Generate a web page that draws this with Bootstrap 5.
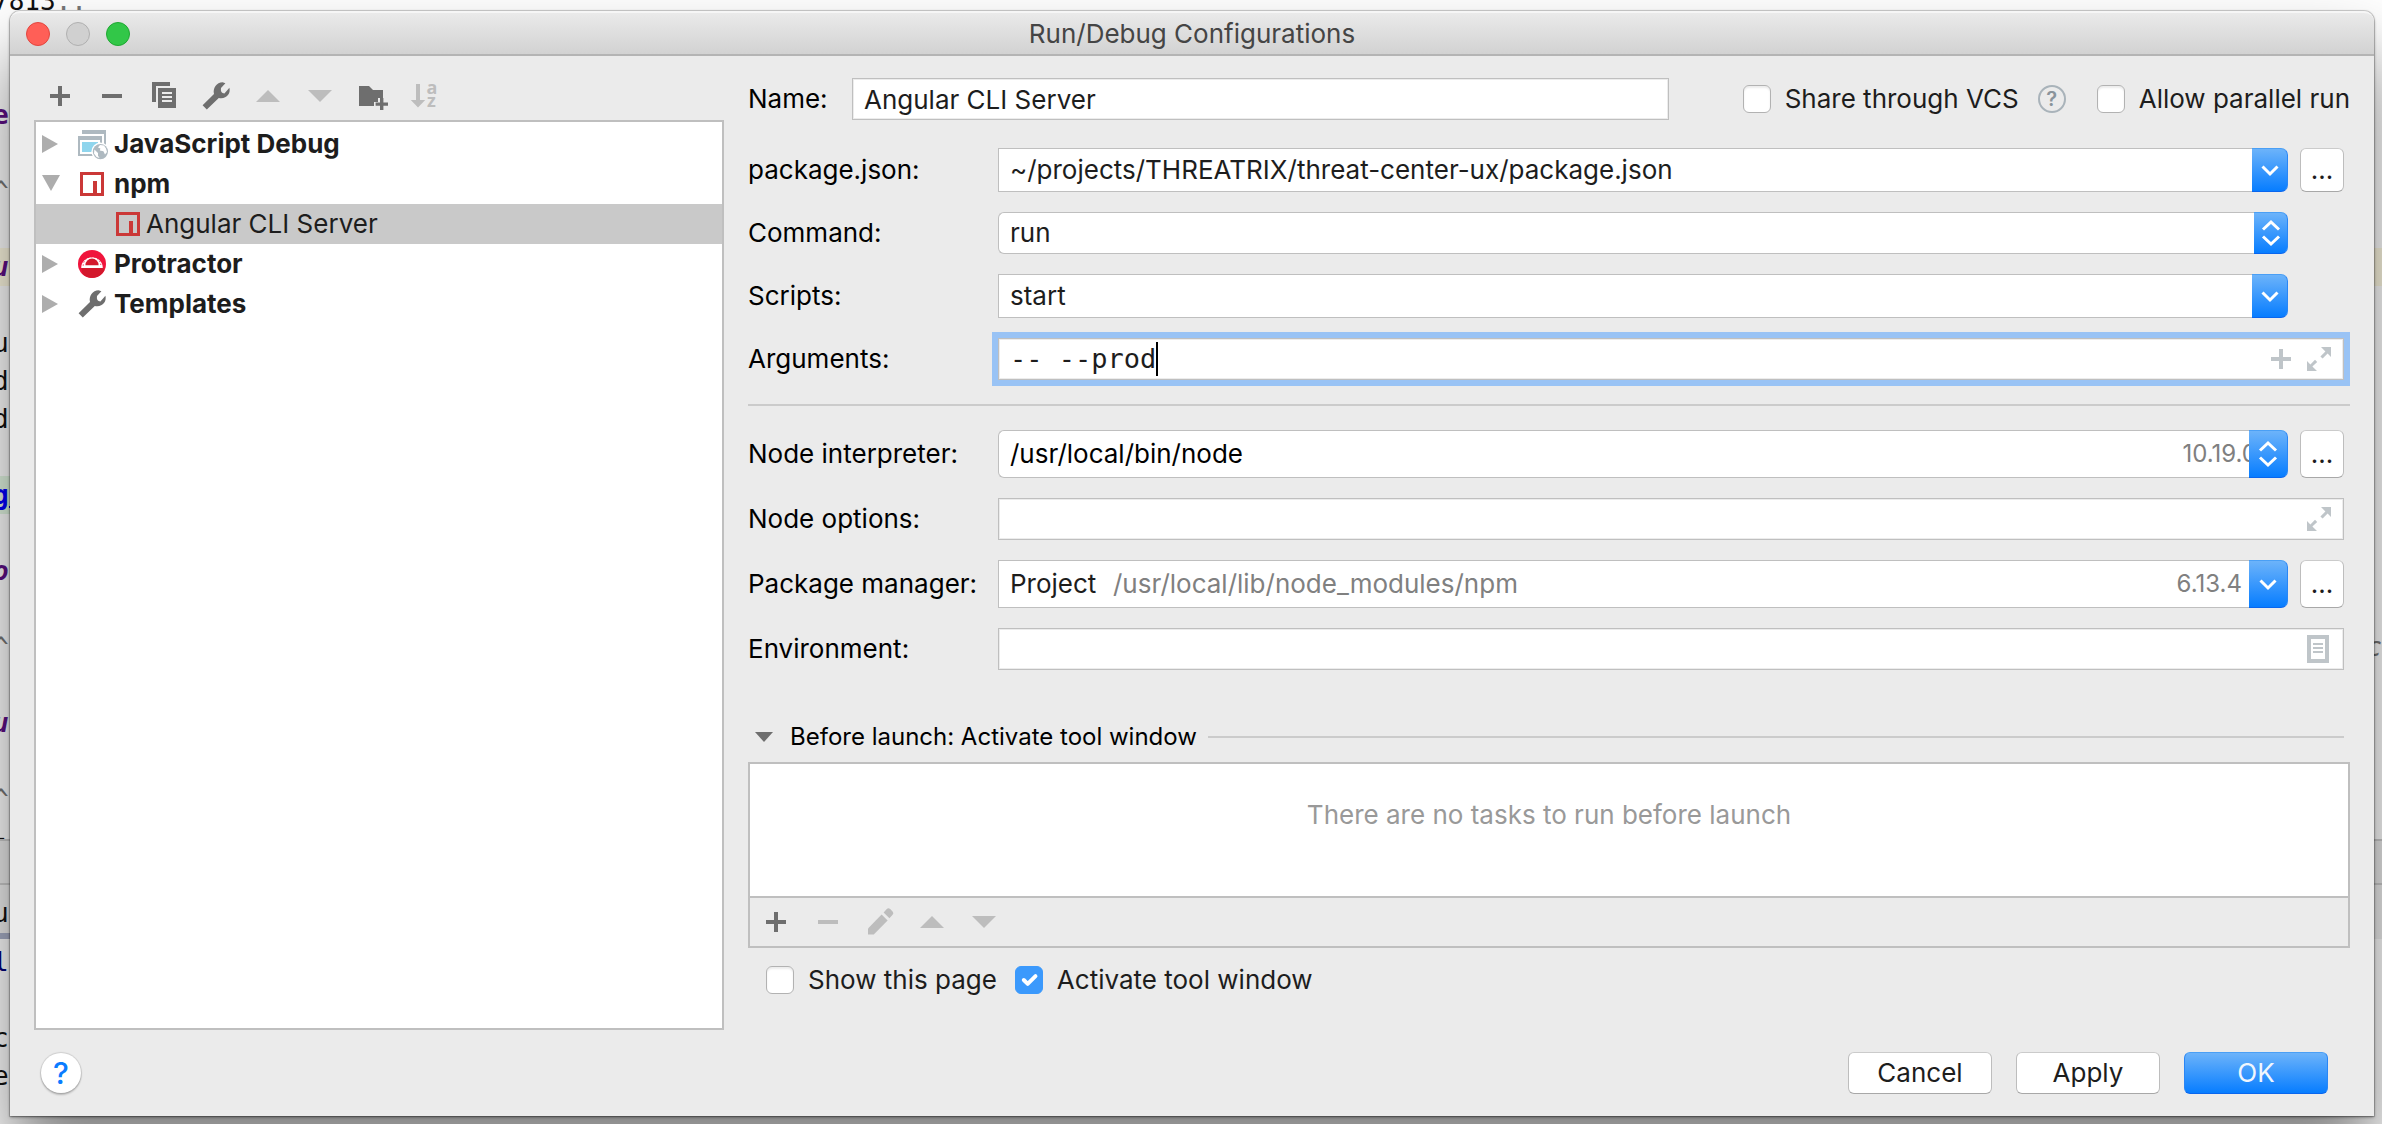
<!DOCTYPE html>
<html lang="en">
<head>
<meta charset="utf-8">
<meta name="viewport" content="width=device-width, initial-scale=1">
<title>Run/Debug Configurations</title>
<link href="https://cdn.jsdelivr.net/npm/bootstrap@5.3.0/dist/css/bootstrap.min.css" rel="stylesheet">
<style>
:root { --line: #bfbfbf; --panel: #ebebeb; --ink: #1d1d1d; --tool: #6e6e6e; --tool-off: #bdbdbd; }
body { font-family: Inter, "Liberation Sans", sans-serif; font-size: 26px; line-height: 32px; color: #000; background: #fff; }

/* editor behind the dialog */
.editor { position: absolute; inset: 0; overflow: hidden; font-family: "DejaVu Sans Mono", monospace; line-height: 38px; color: #111; }
.editor-code { margin: -18px 0 0 -7px; }
.editor-code div { height: 38px; white-space: pre; }
.editor .prop { color: #5e0f86; font-weight: 700; }
.editor .key { color: #00f; font-weight: 700; text-decoration: underline; }
.editor .word { color: #00007a; }
.editor .faint { color: #777; }
.editor .hit { background: #fffae3; }
.editor .found { background: linear-gradient(90deg, #e3f7e3 40px, transparent 40px); }
.editor-tabs { position: absolute; left: 0; right: 0; top: 839px; bottom: 0; }
.editor-tabs > div { padding-left: 0; text-indent: -7px; }
.tab-strip { height: 44px; border-top: 2px solid #ccc; background: #ececec; }
.tab-head { height: 56px; border-top: 2px solid #ccc; background: linear-gradient(90deg, #a9b0c8 40px, transparent 40px) bottom / 100% 6px no-repeat #f0f0f0; line-height: 56px; }

/* dialog */
.dialog { position: relative; margin: 11px 8px 8px 10px; min-height: calc(100vh - 19px); background: var(--panel); border-radius: 10px 10px 0 0; box-shadow: 0 0 0 1px rgba(0,0,0,.14), 0 1px 3px rgba(0,0,0,.5), 0 44px 70px rgba(0,0,0,.5); }
.title-strip { display: grid; grid-template-columns: 1fr auto 1fr; height: 45px; padding: 0 16px; border-top: 2px solid #f6f6f6; border-bottom: 2px solid #b4b4b4; border-radius: 10px 10px 0 0; background: linear-gradient(#eaeaea, #d2d2d2); color: #454545; }
.light { width: 24px; height: 24px; padding: 0; border: 1px solid; border-radius: 50%; }
.light-close { background: #ff5f57; border-color: #e2463f; }
.light-min { background: #d0d0d0; border-color: #b0b0b0; }
.light-zoom { background: #32c748; border-color: #1fa832; }
.dialog-main { padding: 22px 24px 0; column-gap: 24px; }
.side { width: 690px; }
.side-tools { padding: 2px 10px 8px; }
.tool { width: 32px; height: 32px; padding: 0; border: 0; background: none; color: var(--tool); line-height: 0; }
.tool:disabled { color: var(--tool-off); }
.tool-row { gap: 20px; }
.ico { width: 32px; height: 32px; display: block; fill: currentColor; }
.ico-dark { color: var(--tool); }
.tree { border: 2px solid var(--line); padding: 2px 0; background: #fff; color: var(--ink); }
.tree-item { height: 40px; padding-left: 6px; }
.tree-group { font-weight: 700; }
.tree-group .ico { margin: 0 6px 0 16px; }
.tree-child { padding-left: 76px; gap: 2px; background: #c9c9c9; }
.twist { width: 18px; height: 18px; fill: #adadad; }

/* form */
.form-rows { gap: 20px; }
.name-row { margin-bottom: 8px; gap: 74px; }
.name-label { width: 104px; }
.row-label { width: 250px; flex: none; }
.inset { padding-right: 6px; }
.spare { padding-right: 62px; }
.field { height: 42px; border: 1px solid var(--line); background: #fff; color: var(--ink); box-shadow: inset 0 0 0 1px #ececec; }
.field-name { padding: 0 11px; }
.bare { min-width: 0; border: 0; outline: 0; padding: 0 0 0 11px; background: transparent; color: inherit; appearance: none; opacity: 1; }
.combo { height: 44px; color: var(--ink); }
.combo-low { height: 42px; }
.combo-tall { height: 48px; }
.combo-body { border: 1px solid var(--line); border-right: 0; background: #fff; overflow: hidden; }
.combo-round .combo-body { border-radius: 6px 0 0 6px; }
.combo-arrow { width: 36px; padding: 0; border: 1px solid; border-color: #4a9ff5 #2a86f5 #0a66ee; border-left: 0; border-radius: 0 7px 7px 0; background: linear-gradient(#6cb3fa, #077dff); line-height: 0; }
.combo-low .combo-arrow { width: 34px; }
.combo-tall .combo-arrow { width: 39px; }
.combo-arrow svg { width: 20px; height: 32px; fill: none; stroke: #fff; stroke-width: 3; }
.hint { color: #808080; }
.version { font-size: 24px; color: #808080; padding-right: 7px; }
.version-cut { margin-right: -15px; }
.push { border: 1px solid; border-color: #cbcbcb #bdbdbd #a8a8a8; border-radius: 6px; background: #fff; color: var(--ink); padding: 0; }
.browse { width: 44px; margin-left: 12px; }
.focused { outline: 6px solid #99c3f5; border-radius: 0; }
.args { width: calc(9ch + 11px); font-family: "DejaVu Sans Mono", monospace; font-size: 27px; }
.caret { width: 2px; height: 34px; background: #000; }
.field-ico { color: #bfc5c9; }
.field-ico + .field-ico { margin-left: 6px; }
.rule { height: 2px; background: #cbcbcb; }
.group-rule { margin: 4px 0; }

.fold { margin-top: 51px; height: 32px; font-size: 24px; gap: 17px; padding: 0 6px 0 7px; }
.fold .twist { fill: #6e6e6e; }
.fold .rule { margin-left: -6px; }
.tasks { margin-top: 9px; border: 2px solid var(--line); }
.tasks-empty { height: 132px; padding-top: 35px; background: #fff; color: #999; }
.tasks-tools { height: 50px; padding-left: 10px; border-top: 2px solid var(--line); }
.checks { margin: 16px 0 0 18px; gap: 18px; color: var(--ink); }
.tick { gap: 14px; }
.tick .form-check-input { width: 28px; height: 28px; margin: 0; border: 1px solid #b2b2b2; border-radius: 6px; background-color: #fff; box-shadow: inset 0 2px 2px #ececec; flex: none; }
.tick .form-check-input:checked { background-color: #3b99fc; border-color: #3b99fc; box-shadow: none; }
.top-checks { gap: 15px; color: var(--ink); }
.about { width: 28px; height: 28px; padding: 0; border: 2px solid #a9b3ba; border-radius: 50%; background: none; color: #8a949b; font-size: 20px; font-weight: 600; line-height: 24px; }
.dialog-foot { padding: 22px 46px 22px 31px; }
.help { width: 40px; height: 40px; padding: 0; border: 0; border-radius: 50%; background: #fff; color: #0a7cff; font-size: 30px; font-weight: 500; line-height: 40px; box-shadow: 0 0 1px 1px rgba(0,0,0,.12), 0 2px 2px rgba(0,0,0,.2); }
.foot-buttons { gap: 24px; }
.foot-buttons .push { width: 144px; height: 42px; }
.foot-buttons .push-main { border-color: #4a9ff5 #2a86f5 #0a66ee; background: linear-gradient(#6cb3fa, #077dff); color: #f0f6fd; }
</style>
<script src="https://cdn.jsdelivr.net/npm/bootstrap@5.3.0/dist/js/bootstrap.bundle.min.js"></script>
</head>
<body>

<svg width="0" height="0" class="position-absolute" aria-hidden="true">
  <symbol id="i-plus" viewBox="0 0 16 16"><path d="M7 3h2v4h4v2H9v4H7V9H3V7h4z"/></symbol>
  <symbol id="i-minus" viewBox="0 0 16 16"><path d="M3 7h10v2H3z"/></symbol>
  <symbol id="i-copy" viewBox="0 0 16 16"><path d="M2 1h9v2H4v8H2z"/><path fill-rule="evenodd" d="M5 4h9v10H5zM7 6v1h5V6zM7 8v1h5V8zM7 10v1h5v-1z"/></symbol>
  <symbol id="i-wrench" viewBox="0 0 16 16"><path d="M1.3 12.6L7 7C6.3 4 8.3 1.1 11.3 1.1L12.7 1.6L10.5 4C10.2 5.7 10.8 6.7 12.2 6.8L14.7 3.9C15.5 7 13 9.8 9.4 9L3.4 14.8z"/></symbol>
  <symbol id="i-up" viewBox="0 0 16 16"><path d="M2 11h12L8 5z"/></symbol>
  <symbol id="i-down" viewBox="0 0 16 16"><path d="M2 5h12l-6 6z"/></symbol>
  <symbol id="i-folder" viewBox="0 0 16 16"><path d="M1.5 3h5l2 2h5v4H11v2H9v2H1.500z"/><path d="M12 9h1.700v2.200H16v1.700h-2.300V15H12v-2.100H9.800v-1.700H12z"/></symbol>
  <symbol id="i-sort" viewBox="0 0 16 16"><path d="M4 2h2v8h2.600L5 13.700 1.400 10H4z"/><text x="9.200" y="7" font-size="9" font-weight="700" font-family="Open Sans, sans-serif">a</text><text x="9.500" y="13.700" font-size="9" font-weight="700" font-family="Open Sans, sans-serif">z</text></symbol>
  <symbol id="i-pencil" viewBox="0 0 16 16"><path d="M2 11.200L8.800 4.200l3 3L4.900 14.200H2z"/><path d="M9.800 3.200l1.600-1.700q.8-.8 1.700 0l1.200 1.200q.8.8 0 1.700l-1.600 1.700z"/></symbol>
  <symbol id="i-npm" viewBox="0 0 16 16"><path fill="#cb3837" fill-rule="evenodd" d="M2 2h12v12H2zM3.500 3.500v9h5v-6h2v6h2v-9z"/></symbol>
  <symbol id="i-expand" viewBox="0 0 16 16"><path d="M9 2h5v5l-1.700-1.700-2.500 2.500-1.100-1.100 2.500-2.500zM2 9l1.700 1.700L6 8.400l1.100 1.100-2.400 2.300L7 14H2z"/></symbol>
  <symbol id="i-list" viewBox="0 0 16 16"><path fill-rule="evenodd" d="M2 1h11v14H2zM4 3v10h7V3z"/><path d="M5 5h5v1H5zM5 7h5v1H5zM5 9h5v1H5z"/></symbol>
  <symbol id="i-right" viewBox="0 0 18 18"><path d="M0 0l16 9L0 18z"/></symbol>
  <symbol id="i-open" viewBox="0 0 18 18"><path d="M0 0h18L9 16z"/></symbol>
  <symbol id="i-fold" viewBox="0 0 18 18"><path d="M0 4h18L9 14z"/></symbol>
  <symbol id="i-chevron" viewBox="0 0 20 32"><path d="M2.500 12.500L10 20l7.500-7.500"/></symbol>
  <symbol id="i-updown" viewBox="0 0 20 32"><path d="M2 12.500L10 5l8 7.500M2 19.500L10 27l8-7.500"/></symbol>
</svg>

<div class="editor" aria-hidden="true">
  <div class="editor-code">
    <div>7813<span class="faint">..</span></div><div></div><div></div>
    <div class="prop">e</div><div></div>
    <div class="faint">^</div><div></div>
    <div class="prop fst-italic hit">ur</div><div></div>
    <div>u</div><div>d</div><div>d</div><div></div>
    <div class="found"><span class="key">gi</span></div><div></div>
    <div class="prop fst-italic">oc</div><div></div>
    <div class="faint d-flex justify-content-between"><span>^</span><i>c</i></div><div></div>
    <div class="prop fst-italic">ur</div><div></div>
    <div class="faint">^</div><div>-</div>
  </div>
  <div class="editor-tabs bg-white">
    <div class="tab-strip"></div>
    <div class="tab-head mb-1">ul</div>
    <div class="word">l</div><div>&nbsp;</div><div>c</div><div>e</div>
  </div>
</div>

<div class="dialog d-flex flex-column" role="dialog" aria-labelledby="dlg-title">
  <header class="title-strip align-items-center">
    <div class="d-flex gap-3">
      <button class="light light-close" type="button" aria-label="Close"></button>
      <button class="light light-min" type="button" aria-label="Minimize" disabled></button>
      <button class="light light-zoom" type="button" aria-label="Zoom"></button>
    </div>
    <div id="dlg-title">Run/Debug Configurations</div>
  </header>

  <div class="dialog-main d-flex flex-grow-1">
    <section class="side d-flex flex-column flex-shrink-0">
      <div class="tool-row side-tools d-flex">
        <button class="tool" type="button" aria-label="Add"><svg class="ico"><use href="#i-plus"/></svg></button>
        <button class="tool" type="button" aria-label="Remove"><svg class="ico"><use href="#i-minus"/></svg></button>
        <button class="tool" type="button" aria-label="Copy"><svg class="ico"><use href="#i-copy"/></svg></button>
        <button class="tool" type="button" aria-label="Edit templates"><svg class="ico"><use href="#i-wrench"/></svg></button>
        <button class="tool" type="button" aria-label="Move up" disabled><svg class="ico"><use href="#i-up"/></svg></button>
        <button class="tool" type="button" aria-label="Move down" disabled><svg class="ico"><use href="#i-down"/></svg></button>
        <button class="tool" type="button" aria-label="New folder"><svg class="ico"><use href="#i-folder"/></svg></button>
        <button class="tool" type="button" aria-label="Sort" disabled><svg class="ico"><use href="#i-sort"/></svg></button>
      </div>
      <div class="tree flex-grow-1" role="tree">
        <div class="tree-item tree-group d-flex align-items-center" role="treeitem" aria-expanded="false">
          <svg class="twist"><use href="#i-right"/></svg>
          <svg class="ico" viewBox="0 0 16 16"><path fill="#aeb9c0" d="M3 1h12v8h-1V3H3z"/><path fill="#aeb9c0" fill-rule="evenodd" d="M1 4h12v10H1zM2 6v7h10V6z"/><path fill="#8fd5ed" d="M3 7h8v5H3z"/><circle cx="12.200" cy="11.800" r="4.500" fill="#fff"/><circle cx="12.200" cy="11.800" r="3.800" fill="#aeb9c0"/><path fill="#fff" d="M9.200 10.800l1.800 1.700v1.400l.8 1.100-1.500-.5-1.300-1.700zM12 8.500l-1 1.200 1.200.5-.3 1.100 1.800.3.800 1.700 1-1.300-.5-1.800-1-1.400z"/></svg>
          <span>JavaScript Debug</span>
        </div>
        <div class="tree-item tree-group d-flex align-items-center" role="treeitem" aria-expanded="true">
          <svg class="twist"><use href="#i-open"/></svg>
          <svg class="ico"><use href="#i-npm"/></svg>
          <span>npm</span>
        </div>
        <div class="tree-item tree-child d-flex align-items-center" role="treeitem" aria-selected="true">
          <svg class="ico"><use href="#i-npm"/></svg>
          <span>Angular CLI Server</span>
        </div>
        <div class="tree-item tree-group d-flex align-items-center" role="treeitem" aria-expanded="false">
          <svg class="twist"><use href="#i-right"/></svg>
          <svg class="ico" viewBox="0 0 16 16"><circle cx="8" cy="8" r="7" fill="#f0143c"/><path fill="#d3182c" d="M2.700 10h10.800l.8 1a7 7 0 0 1-11 2z"/><path fill="#fff" d="M2.600 10a5.400 5.400 0 0 1 10.800 0z"/><path fill="#d3182c" d="M4.700 8.600a3.300 3.300 0 0 1 6.600 0z"/><path stroke="#f0143c" stroke-width=".5" fill="none" stroke-dasharray=".6 1" d="M3.600 8.800a4.400 4.400 0 0 1 8.800 0"/></svg>
          <span>Protractor</span>
        </div>
        <div class="tree-item tree-group d-flex align-items-center" role="treeitem" aria-expanded="false">
          <svg class="twist"><use href="#i-right"/></svg>
          <svg class="ico ico-dark"><use href="#i-wrench"/></svg>
          <span>Templates</span>
        </div>
      </div>
    </section>

    <section class="flex-grow-1">
      <form class="form-rows d-flex flex-column">
        <div class="name-row d-flex align-items-center">
          <div class="d-flex align-items-center flex-grow-1">
            <label class="name-label" for="f-name">Name:</label>
            <input class="field field-name flex-grow-1" id="f-name" type="text" value="Angular CLI Server">
          </div>
          <div class="top-checks d-flex align-items-center">
            <div class="tick d-flex align-items-center"><input class="form-check-input" type="checkbox" id="c-vcs"><label for="c-vcs">Share through VCS</label></div>
            <button class="about ms-1" type="button" aria-label="About sharing">?</button>
            <div class="tick d-flex align-items-center ps-3"><input class="form-check-input" type="checkbox" id="c-par"><label for="c-par">Allow parallel run</label></div>
          </div>
        </div>

        <div class="d-flex align-items-center inset">
          <label class="row-label" for="f-pkg">package.json:</label>
          <div class="combo d-flex flex-grow-1">
            <div class="combo-body d-flex flex-grow-1"><select class="bare flex-grow-1" id="f-pkg"><option>~/projects/THREATRIX/threat-center-ux/package.json</option></select></div>
            <button class="combo-arrow" type="button" aria-label="Open list"><svg><use href="#i-chevron"/></svg></button>
            <button class="push browse" type="button">...</button>
          </div>
        </div>
        <div class="d-flex align-items-center spare">
          <label class="row-label" for="f-cmd">Command:</label>
          <div class="combo combo-low combo-round d-flex flex-grow-1">
            <div class="combo-body d-flex flex-grow-1"><select class="bare flex-grow-1" id="f-cmd"><option>run</option></select></div>
            <button class="combo-arrow" type="button" aria-label="Open list"><svg><use href="#i-updown"/></svg></button>
          </div>
        </div>
        <div class="d-flex align-items-center spare">
          <label class="row-label" for="f-scr">Scripts:</label>
          <div class="combo d-flex flex-grow-1">
            <div class="combo-body d-flex flex-grow-1"><select class="bare flex-grow-1" id="f-scr"><option>start</option></select></div>
            <button class="combo-arrow" type="button" aria-label="Open list"><svg><use href="#i-chevron"/></svg></button>
          </div>
        </div>
        <div class="d-flex align-items-center inset">
          <label class="row-label" for="f-arg">Arguments:</label>
          <div class="field focused d-flex align-items-center flex-grow-1">
            <input class="bare args" id="f-arg" type="text" value="-- --prod"><span class="caret"></span>
            <button class="tool field-ico ms-auto" type="button" aria-label="Insert macro"><svg class="ico"><use href="#i-plus"/></svg></button>
            <button class="tool field-ico me-2" type="button" aria-label="Expand"><svg class="ico"><use href="#i-expand"/></svg></button>
          </div>
        </div>

        <div class="rule group-rule"></div>

        <div class="d-flex align-items-center inset">
          <label class="row-label" for="f-node">Node interpreter:</label>
          <div class="combo combo-tall combo-round d-flex flex-grow-1">
            <div class="combo-body d-flex align-items-center flex-grow-1 text-black"><select class="bare flex-grow-1" id="f-node"><option>/usr/local/bin/node</option></select><span class="version version-cut">10.19.0</span></div>
            <button class="combo-arrow" type="button" aria-label="Open list"><svg><use href="#i-updown"/></svg></button>
            <button class="push browse" type="button">...</button>
          </div>
        </div>
        <div class="d-flex align-items-center inset">
          <label class="row-label" for="f-opt">Node options:</label>
          <div class="field d-flex align-items-center flex-grow-1">
            <input class="bare flex-grow-1" id="f-opt" type="text">
            <button class="tool field-ico me-2" type="button" aria-label="Expand"><svg class="ico"><use href="#i-expand"/></svg></button>
          </div>
        </div>
        <div class="d-flex align-items-center inset">
          <label class="row-label" for="f-pm">Package manager:</label>
          <div class="combo combo-tall d-flex flex-grow-1">
            <div class="combo-body d-flex align-items-center flex-grow-1"><select class="bare" id="f-pm"><option>Project</option></select><span class="hint ms-3 me-auto">/usr/local/lib/node_modules/npm</span><span class="version">6.13.4</span></div>
            <button class="combo-arrow" type="button" aria-label="Open list"><svg><use href="#i-chevron"/></svg></button>
            <button class="push browse" type="button">...</button>
          </div>
        </div>
        <div class="d-flex align-items-center inset">
          <label class="row-label" for="f-env">Environment:</label>
          <div class="field d-flex align-items-center flex-grow-1">
            <input class="bare flex-grow-1" id="f-env" type="text">
            <button class="tool field-ico me-2" type="button" aria-label="Edit variables"><svg class="ico"><use href="#i-list"/></svg></button>
          </div>
        </div>
      </form>

      <div class="fold d-flex align-items-center">
        <svg class="twist"><use href="#i-fold"/></svg>
        <span>Before launch: Activate tool window</span>
        <div class="rule flex-grow-1"></div>
      </div>
      <div class="tasks">
        <div class="tasks-empty text-center">There are no tasks to run before launch</div>
        <div class="tasks-tools tool-row d-flex align-items-center">
          <button class="tool" type="button" aria-label="Add task"><svg class="ico"><use href="#i-plus"/></svg></button>
          <button class="tool" type="button" aria-label="Remove task" disabled><svg class="ico"><use href="#i-minus"/></svg></button>
          <button class="tool" type="button" aria-label="Edit task" disabled><svg class="ico"><use href="#i-pencil"/></svg></button>
          <button class="tool" type="button" aria-label="Move task up" disabled><svg class="ico"><use href="#i-up"/></svg></button>
          <button class="tool" type="button" aria-label="Move task down" disabled><svg class="ico"><use href="#i-down"/></svg></button>
        </div>
      </div>
      <div class="checks d-flex">
        <div class="tick d-flex align-items-center"><input class="form-check-input" type="checkbox" id="c-show"><label for="c-show">Show this page</label></div>
        <div class="tick d-flex align-items-center"><input class="form-check-input" type="checkbox" id="c-act" checked><label for="c-act">Activate tool window</label></div>
      </div>
    </section>
  </div>

  <footer class="dialog-foot d-flex align-items-center justify-content-between">
    <button class="help" type="button" aria-label="Help">?</button>
    <div class="foot-buttons d-flex">
      <button class="push" type="button">Cancel</button>
      <button class="push" type="button">Apply</button>
      <button class="push push-main" type="submit">OK</button>
    </div>
  </footer>
</div>
</body>
</html>
